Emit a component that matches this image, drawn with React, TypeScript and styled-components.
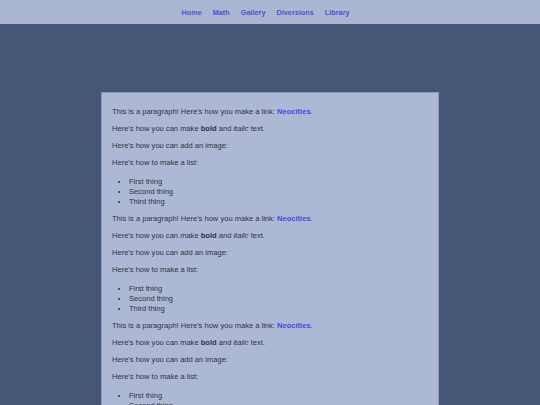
import React from "react";
import styled, { createGlobalStyle } from "styled-components";

const GlobalStyle = createGlobalStyle`
  body {
    margin: 0;
    background: #465677;
    font-family: "Liberation Sans", Arial, sans-serif;
    font-size: 7.55px;
    color: #2e3340;
  }
`;

const Header = styled.header`
  height: 24px;
  background: #abb6d3;
  display: flex;
  justify-content: center;
  align-items: center;
`;

const Nav = styled.nav`
  display: flex;
  gap: 11px;
  padding-right: 9px;
`;

const NavLink = styled.a`
  color: #4b54d1;
  font-weight: bold;
  font-size: 7.3px;
  text-decoration: none;
`;

const Main = styled.main`
  width: 316px;
  margin: 68px auto 0;
  padding: 7px 10px 10px;
  background: #adb8d5;
  border: 1px solid #8d98b6;
`;

const Paragraph = styled.p`
  margin: 7px 0;
  line-height: 10px;
`;

const Link = styled.a`
  color: #3f4ee0;
  font-weight: bold;
  text-decoration: none;
`;

const List = styled.ul`
  margin: 9px 0 7px;
  padding-left: 17px;
  line-height: 10px;
`;

const links = ["Home", "Math", "Gallery", "Diversions", "Library"];

const Block = () => (
  <>
    <Paragraph>
      This is a paragraph! Here's how you make a link: <Link href="#">Neocities</Link>.
    </Paragraph>
    <Paragraph>
      Here's how you can make <strong>bold</strong> and <em>italic</em> text.
    </Paragraph>
    <Paragraph>Here's how you can add an image:</Paragraph>
    <Paragraph>Here's how to make a list:</Paragraph>
    <List>
      <li>First thing</li>
      <li>Second thing</li>
      <li>Third thing</li>
    </List>
  </>
);

export default function App() {
  return (
    <>
      <GlobalStyle />
      <Header>
        <Nav>
          {links.map((l) => (
            <NavLink key={l} href="#">
              {l}
            </NavLink>
          ))}
        </Nav>
      </Header>
      <Main>
        <Block />
        <Block />
        <Block />
        <Block />
      </Main>
    </>
  );
}
